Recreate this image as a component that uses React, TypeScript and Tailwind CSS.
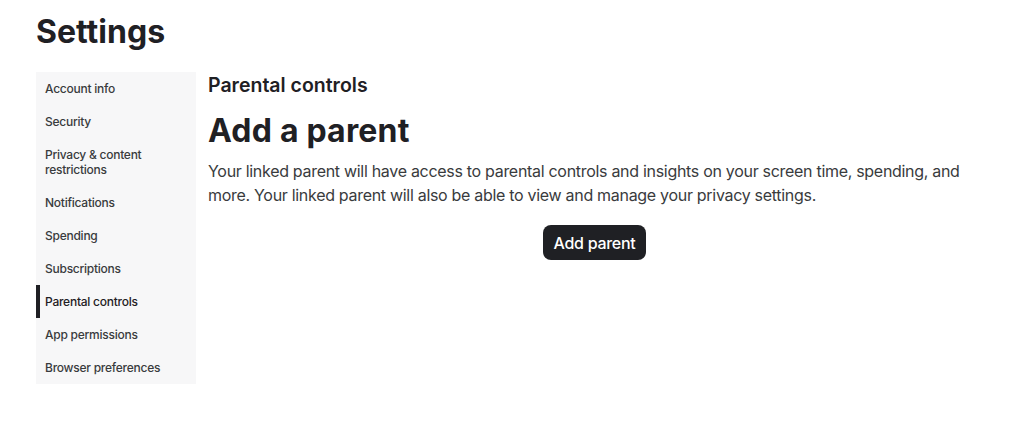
import React from "react";

const items = [
  "Account info",
  "Security",
  "Privacy & content restrictions",
  "Notifications",
  "Spending",
  "Subscriptions",
  "Parental controls",
  "App permissions",
  "Browser preferences",
];

export default function App() {
  return (
    <div
      className="min-h-[427px] bg-white px-9 pt-[12px] text-[#1f2024]"
      style={{ fontFamily: "Inter, 'Noto Sans', sans-serif" }}
    >
      <h1 className="text-[32px] font-bold leading-[40px] tracking-[0px]">Settings</h1>
      <div className="mt-[20px] flex gap-3">
        <nav className="w-[160px] shrink-0 bg-[#f7f7f8]">
          {items.map((it) => {
            const active = it === "Parental controls";
            return (
              <div
                key={it}
                className={`border-l-4 py-[9px] pl-[5px] pr-3 text-[12px] font-medium leading-[15px] tracking-[-0.25px] ${
                  active ? "border-[#1f2024] text-[#1f2024]" : "border-transparent text-[#393b3d]"
                }`}
              >
                {it}
              </div>
            );
          })}
        </nav>
        <main className="flex-1">
          <h2 className="mt-[1px] text-[19.5px] font-semibold leading-[24px]">Parental controls</h2>
          <h3 className="mt-[14px] text-[32px] font-bold leading-[40px] tracking-[0.2px]">Add a parent</h3>
          <p className="mt-[8px] text-[16px] leading-[24px] tracking-[-0.3px] text-[#393b3d]">
            Your linked parent will have access to parental controls and insights on your screen time, spending, and
            more. Your linked parent will also be able to view and manage your privacy settings.
          </p>
          <div className="mt-[18px] flex justify-center">
            <button className="h-[35px] rounded-lg bg-[#1f2024] px-[11px] text-[16px] font-medium tracking-[-0.3px] text-white">
              Add parent
            </button>
          </div>
        </main>
      </div>
    </div>
  );
}
